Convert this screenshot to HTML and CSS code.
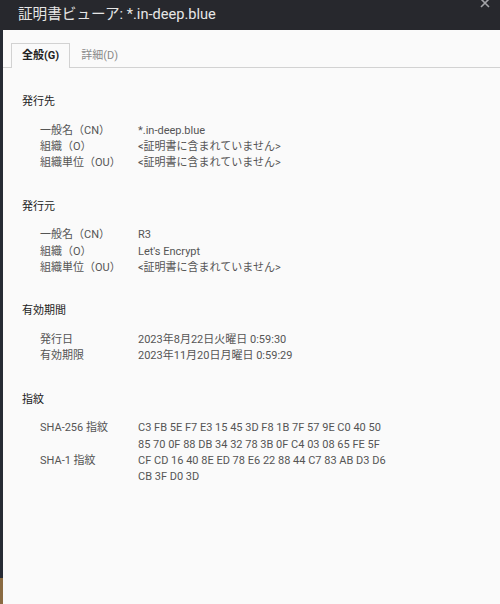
FILE: index.html
```html
<!DOCTYPE html>
<html lang="ja">
<head>
<meta charset="utf-8">
<title>証明書ビューア</title>
<link rel="stylesheet" href="styles.css">
</head>
<body>
<div class="titlebar">
  <span class="title">証明書ビューア: *.in-deep.blue</span>
  <svg class="close" width="10" height="10" viewBox="0 0 10 10"><path d="M1 1 L9 9 M9 1 L1 9" stroke="#a3a4a8" stroke-width="1.6" fill="none"/></svg>
</div>
<div class="main">
  <div class="strip"></div>
  <div class="content">
    <div class="tabs">
      <div class="tab active">全般(G)</div>
      <div class="tab">詳細(D)</div>
    </div>
    <div class="panel">
      <section class="sec">
        <h2 class="head">発行先</h2>
        <div class="rows">
          <div class="label">一般名（CN）</div><div class="val">*.in-deep.blue</div>
          <div class="label">組織（O）</div><div class="val">&lt;証明書に含まれていません&gt;</div>
          <div class="label">組織単位（OU）</div><div class="val">&lt;証明書に含まれていません&gt;</div>
        </div>
      </section>
      <section class="sec">
        <h2 class="head">発行元</h2>
        <div class="rows">
          <div class="label">一般名（CN）</div><div class="val">R3</div>
          <div class="label">組織（O）</div><div class="val">Let's Encrypt</div>
          <div class="label">組織単位（OU）</div><div class="val">&lt;証明書に含まれていません&gt;</div>
        </div>
      </section>
      <section class="sec">
        <h2 class="head">有効期間</h2>
        <div class="rows">
          <div class="label">発行日</div><div class="val">2023年8月22日火曜日 0:59:30</div>
          <div class="label">有効期限</div><div class="val">2023年11月20日月曜日 0:59:29</div>
        </div>
      </section>
      <section class="sec">
        <h2 class="head">指紋</h2>
        <div class="rows">
          <div class="label">SHA-256 指紋</div><div class="val">C3 FB 5E F7 E3 15 45 3D F8 1B 7F 57 9E C0 40 50<br>85 70 0F 88 DB 34 32 78 3B 0F C4 03 08 65 FE 5F</div>
          <div class="label">SHA-1 指紋</div><div class="val">CF CD 16 40 8E ED 78 E6 22 88 44 C7 83 AB D3 D6<br>CB 3F D0 3D</div>
        </div>
      </section>
    </div>
  </div>
</div>
</body>
</html>
```
FILE: styles.css
```css
html, body {
  margin: 0;
  padding: 0;
}
body {
  width: 500px;
  height: 604px;
  overflow: hidden;
  background: #fafafa;
  font-family: Roboto, "Noto Sans CJK JP", sans-serif;
  font-size: 11px;
  color: #333;
}
.titlebar {
  height: 30px;
  background: #27282d;
  display: flex;
  align-items: center;
  padding-left: 18px;
  box-sizing: border-box;
}
.title {
  color: #e6e6e6;
  font-size: 14.6px;
  line-height: 18px;
  margin-top: -2px;
}
.close {
  margin-left: auto;
  margin-right: 10px;
  align-self: flex-start;
  margin-top: -2px;
}
.main {
  display: flex;
  height: 574px;
}
.strip {
  width: 3px;
  flex: none;
  background: linear-gradient(#272b34 0, #272b34 548px, #8a6b42 548px);
}
.content {
  flex: 1;
}
.tabs {
  display: flex;
  padding: 13px 0 0 8px;
  border-bottom: 1px solid #d2d2d2;
  height: 38px;
  box-sizing: border-box;
}
.tab {
  padding: 0 10px;
  line-height: 24px;
  color: #8a8a8a;
  border: 1px solid transparent;
  border-bottom: none;
  margin-bottom: -1px;
}
.tab.active {
  color: #222;
  font-weight: 700;
  border-color: #d2d2d2;
  background: #fafafa;
}
.panel {
  padding: 26px 0 0 19px;
}
.sec {
  margin-bottom: 27px;
}
.head {
  margin: 0 0 12.5px;
  font-size: 11px;
  font-weight: 400;
  line-height: 16px;
  color: #222;
}
.rows {
  display: grid;
  grid-template-columns: 98px auto;
  padding-left: 18px;
  line-height: 16.4px;
  color: #555;
}
.val {
  white-space: nowrap;
}
```
